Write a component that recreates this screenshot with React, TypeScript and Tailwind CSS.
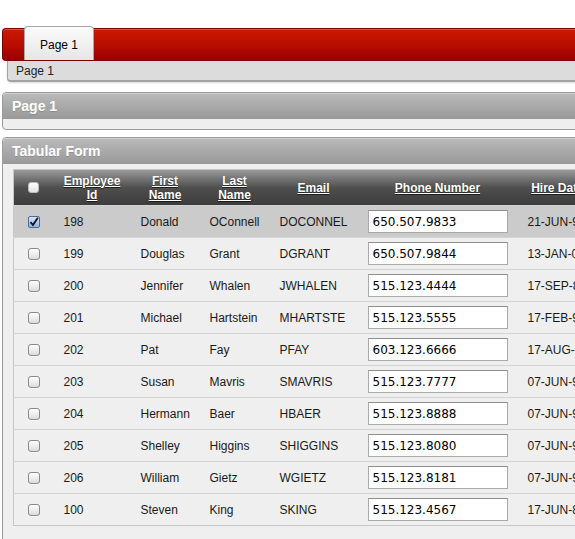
import React from "react";

type Emp = {
  id: string;
  first: string;
  last: string;
  email: string;
  phone: string;
  hired: string;
  checked?: boolean;
};

const rows: Emp[] = [
  { id: "198", first: "Donald", last: "OConnell", email: "DOCONNEL", phone: "650.507.9833", hired: "21-JUN-99", checked: true },
  { id: "199", first: "Douglas", last: "Grant", email: "DGRANT", phone: "650.507.9844", hired: "13-JAN-00" },
  { id: "200", first: "Jennifer", last: "Whalen", email: "JWHALEN", phone: "515.123.4444", hired: "17-SEP-87" },
  { id: "201", first: "Michael", last: "Hartstein", email: "MHARTSTE", phone: "515.123.5555", hired: "17-FEB-96" },
  { id: "202", first: "Pat", last: "Fay", email: "PFAY", phone: "603.123.6666", hired: "17-AUG-97" },
  { id: "203", first: "Susan", last: "Mavris", email: "SMAVRIS", phone: "515.123.7777", hired: "07-JUN-94" },
  { id: "204", first: "Hermann", last: "Baer", email: "HBAER", phone: "515.123.8888", hired: "07-JUN-94" },
  { id: "205", first: "Shelley", last: "Higgins", email: "SHIGGINS", phone: "515.123.8080", hired: "07-JUN-94" },
  { id: "206", first: "William", last: "Gietz", email: "WGIETZ", phone: "515.123.8181", hired: "07-JUN-94" },
  { id: "100", first: "Steven", last: "King", email: "SKING", phone: "515.123.4567", hired: "17-JUN-87" },
];

function Check({ checked }: { checked?: boolean }) {
  if (checked) {
    return (
      <span className="flex h-[12px] w-[12px] items-center justify-center rounded-[2px] border border-[#4a6a9a] bg-linear-to-b from-[#d8e6fb] to-[#8fb2e6]">
        <svg width="10" height="10" viewBox="0 0 10 10">
          <path d="M1.5 5.2 L4 8 L8.8 0.8" fill="none" stroke="#111" strokeWidth="1.8" />
        </svg>
      </span>
    );
  }
  return (
    <span className="block h-[12px] w-[12px] rounded-[3px] border border-[#8a8a8a] bg-linear-to-b from-white to-[#dcdcdc] shadow-[0_1px_0_rgba(255,255,255,0.6)]" />
  );
}

function Head({ lines, w }: { lines: string[]; w: string }) {
  return (
    <th className={`${w} px-1 text-center align-middle text-[12px] font-bold leading-[14px] text-white underline [text-shadow:0_1px_1px_rgba(0,0,0,0.6)]`}>
      {lines.map((l) => (
        <div key={l}>{l}</div>
      ))}
    </th>
  );
}

export default function App() {
  return (
    <div className="h-[539px] w-[575px] overflow-hidden bg-white font-['Liberation_Sans',Arial,sans-serif] text-[#1a1a1a]">
      <div className="w-[720px] pt-[28px]">
        {/* top tab bar */}
        <div className="ml-[2px] flex h-[33px] items-end rounded-l-[4px] border border-r-0 border-[#7e0000] bg-linear-to-b from-[#cc1800] via-[#b90e00] to-[#990000] pl-[21px] shadow-[inset_0_1px_0_rgba(255,140,120,0.5)]">
          <div className="flex h-[34px] w-[70px] items-center justify-center rounded-t-[4px] border border-b-0 border-[#a8a8a8] bg-linear-to-b from-[#fbfbfb] to-[#e6e6e6] pt-[3px] text-[12px] text-black">
            Page 1
          </div>
        </div>
        {/* breadcrumb */}
        <div className="ml-[7px] flex h-[21px] items-center rounded-bl-[4px] border-b-2 border-l border-[#a3a3a3] bg-[#dcdcdc] pl-[8px] text-[12px] text-[#222] shadow-[0_1px_2px_rgba(0,0,0,0.15)]">
          Page 1
        </div>

        {/* region Page 1 */}
        <div className="ml-[2px] mt-[10px] rounded-[4px] border border-[#9c9c9c] bg-[#eeeeee]">
          <div className="flex h-[26px] items-center rounded-t-[3px] bg-linear-to-b from-[#bababa] to-[#999999] pl-[9px] text-[14px] font-bold text-white shadow-[inset_0_1px_0_#cfcfcf] [text-shadow:0_1px_0_rgba(0,0,0,0.15)]">
            Page 1
          </div>
          <div className="h-[10px]" />
        </div>

        {/* region Tabular Form */}
        <div className="ml-[2px] mt-[7px] rounded-[4px] border border-[#9c9c9c] bg-[#efefef]">
          <div className="flex h-[26px] items-center rounded-t-[3px] bg-linear-to-b from-[#bababa] to-[#999999] pl-[9px] text-[14px] font-bold text-white shadow-[inset_0_1px_0_#cfcfcf] [text-shadow:0_1px_0_rgba(0,0,0,0.15)]">
            Tabular Form
          </div>
          <div className="pb-[24px] pl-[10px] pt-[5px]">
            <table className="table-fixed border-collapse border border-[#c6c6c6] text-[12px]">
              <thead>
                <tr className="h-[36px] bg-linear-to-b from-[#9a9a9a] via-[#4e4e4e] to-[#3b3b3b]">
                  <th className="w-[40px]">
                    <div className="flex justify-center">
                      <span className="block h-[11px] w-[11px] rounded-[3px] border border-[#bbb] bg-linear-to-b from-white to-[#e4e4e4]" />
                    </div>
                  </th>
                  <Head lines={["Employee", "Id"]} w="w-[77px]" />
                  <Head lines={["First", "Name"]} w="w-[69px]" />
                  <Head lines={["Last", "Name"]} w="w-[70px]" />
                  <Head lines={["Email"]} w="w-[88px]" />
                  <Head lines={["Phone Number"]} w="w-[160px]" />
                  <Head lines={["Hire Date"]} w="w-[80px]" />
                  <Head lines={["Salary"]} w="w-[80px]" />
                </tr>
              </thead>
              <tbody>
                {rows.map((r) => (
                  <tr
                    key={r.id}
                    className={`h-[32px] border-t border-[#d4d4d4] ${r.checked ? "bg-[#cbcbcb]" : "bg-[#efefef]"}`}
                  >
                    <td>
                      <div className="flex justify-center">
                        <Check checked={r.checked} />
                      </div>
                    </td>
                    <td className="pl-[10px]">{r.id}</td>
                    <td className="pl-[10px]">{r.first}</td>
                    <td className="pl-[10px]">{r.last}</td>
                    <td className="pl-[10px]">{r.email}</td>
                    <td className="pl-[10px]">
                      <div className="flex h-[23px] w-[140px] items-center border border-[#a9a9a9] border-t-[#8e8e8e] bg-white pl-[4px] font-['DejaVu_Sans',sans-serif] text-[12px] text-black">
                        {r.phone}
                      </div>
                    </td>
                    <td className="pl-[10px]">{r.hired}</td>
                    <td className="pl-[10px]" />
                  </tr>
                ))}
              </tbody>
            </table>
          </div>
        </div>
      </div>
    </div>
  );
}
